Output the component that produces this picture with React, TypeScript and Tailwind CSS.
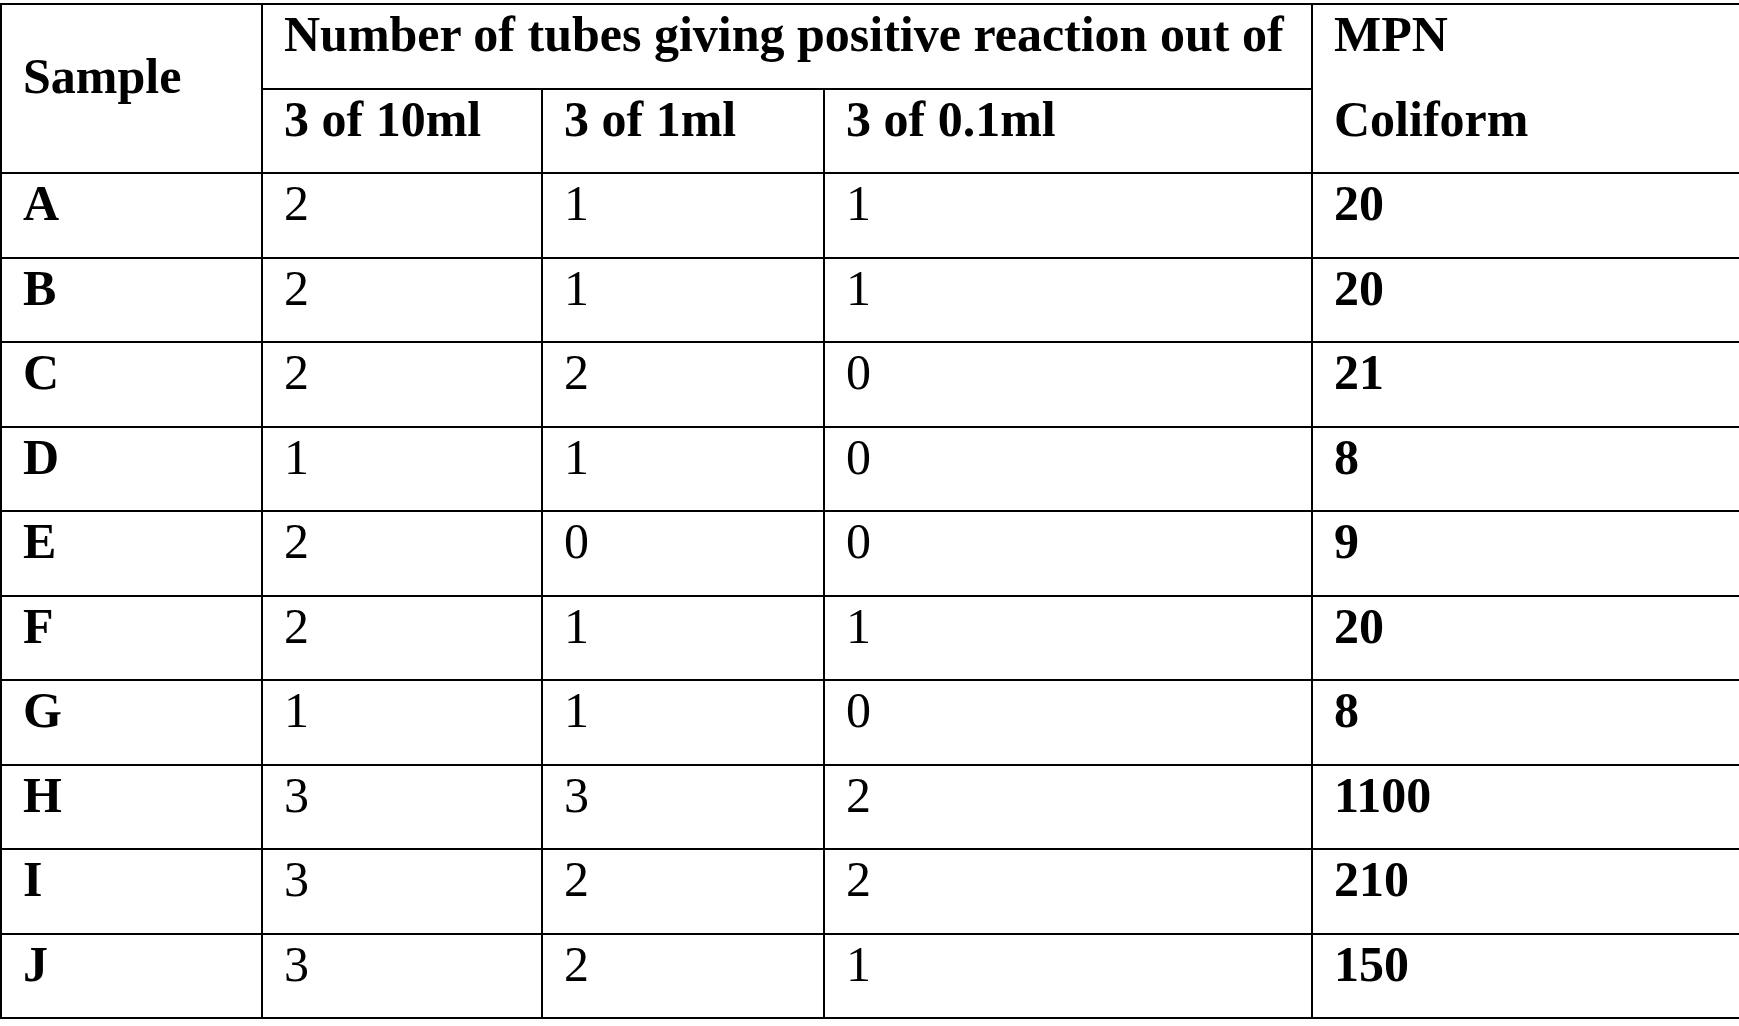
const rows = [
  ["A", "2", "1", "1", "20"],
  ["B", "2", "1", "1", "20"],
  ["C", "2", "2", "0", "21"],
  ["D", "1", "1", "0", "8"],
  ["E", "2", "0", "0", "9"],
  ["F", "2", "1", "1", "20"],
  ["G", "1", "1", "0", "8"],
  ["H", "3", "3", "2", "1100"],
  ["I", "3", "2", "2", "210"],
  ["J", "3", "2", "1", "150"],
];

export default function App() {
  return (
    <div
      className="w-full min-h-screen bg-white overflow-hidden pt-[3px] text-black text-[50px] leading-[56px]"
      style={{ fontFamily: '"Liberation Serif", "Times New Roman", serif' }}
    >
      <div className="grid grid-cols-[259px_278px_280px_486px_460px] auto-rows-[82.5px] gap-[2px] p-[2px] bg-black w-max">
        {/* header */}
        <div className="row-span-2 bg-white pl-[21px] pt-[43px] font-bold">Sample</div>
        <div className="col-span-3 bg-white pl-[21px] pt-[1px] font-bold whitespace-nowrap">
          Number of tubes giving positive reaction out of
        </div>
        <div className="row-span-2 bg-white pl-[21px] pt-[1px] font-bold">
          <div className="h-[84.5px]">MPN</div>
          <div>Coliform</div>
        </div>
        <div className="bg-white pl-[21px] pt-[1px] font-bold">3 of 10ml</div>
        <div className="bg-white pl-[21px] pt-[1px] font-bold">3 of 1ml</div>
        <div className="bg-white pl-[21px] pt-[1px] font-bold">3 of 0.1ml</div>

        {/* data */}
        {rows.map((r) => (
          <div key={r[0]} className="contents">
            <div className="bg-white pl-[21px] pt-[1px] font-bold">{r[0]}</div>
            <div className="bg-white pl-[21px] pt-[1px]">{r[1]}</div>
            <div className="bg-white pl-[21px] pt-[1px]">{r[2]}</div>
            <div className="bg-white pl-[21px] pt-[1px]">{r[3]}</div>
            <div className="bg-white pl-[21px] pt-[1px] font-bold">{r[4]}</div>
          </div>
        ))}
      </div>
    </div>
  );
}
